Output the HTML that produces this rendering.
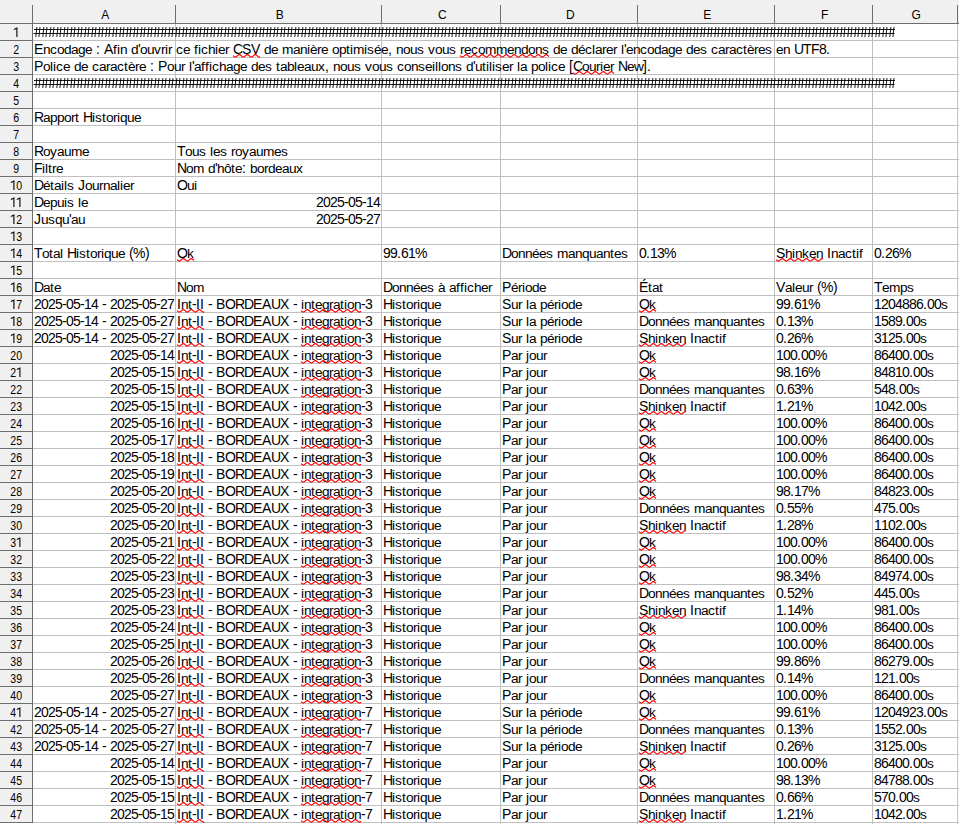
<!DOCTYPE html><html><head><meta charset="utf-8"><style>html,body{margin:0;padding:0;background:#fff;overflow:hidden}svg{display:block}.t{font-family:"Liberation Sans",sans-serif;font-size:14px;fill:#000;white-space:pre}.l{font-size:13.7px}.h{font-family:"Liberation Sans",sans-serif;font-size:12px;fill:#000}</style></head><body>
<svg width="959" height="824" viewBox="0 0 959 824">
<defs>
<path id="w0" d="M233 1.62 C233.10 1.71 233.20 1.81 233.30 1.90 C233.97 2.53 234.63 3.10 235.30 3.10 C235.97 3.10 236.63 2.53 237.30 1.90 C237.97 1.27 238.63 0.70 239.30 0.70 C239.97 0.70 240.63 1.27 241.30 1.90 C241.97 2.53 242.63 3.10 243.30 3.10 C243.97 3.10 244.63 2.53 245.30 1.90 C245.97 1.27 246.63 0.70 247.30 0.70 C247.97 0.70 248.63 1.27 249.30 1.90 C249.97 2.53 250.63 3.10 251.30 3.10 C251.97 3.10 252.63 2.53 253.30 1.90 C253.97 1.27 254.63 0.70 255.30 0.70 C255.97 0.70 256.63 1.27 257.30 1.90 C257.97 2.53 258.63 3.10 259.30 3.10 C259.53 3.10 259.77 3.04 260.00 2.92"/>
<path id="w1" d="M460 1.62 C460.10 1.71 460.20 1.81 460.30 1.90 C460.97 2.53 461.63 3.10 462.30 3.10 C462.97 3.10 463.63 2.53 464.30 1.90 C464.97 1.27 465.63 0.70 466.30 0.70 C466.97 0.70 467.63 1.27 468.30 1.90 C468.97 2.53 469.63 3.10 470.30 3.10 C470.97 3.10 471.63 2.53 472.30 1.90 C472.97 1.27 473.63 0.70 474.30 0.70 C474.97 0.70 475.63 1.27 476.30 1.90 C476.97 2.53 477.63 3.10 478.30 3.10 C478.97 3.10 479.63 2.53 480.30 1.90 C480.97 1.27 481.63 0.70 482.30 0.70 C482.97 0.70 483.63 1.27 484.30 1.90 C484.97 2.53 485.63 3.10 486.30 3.10 C486.97 3.10 487.63 2.53 488.30 1.90 C488.97 1.27 489.63 0.70 490.30 0.70 C490.97 0.70 491.63 1.27 492.30 1.90 C492.97 2.53 493.63 3.10 494.30 3.10 C494.97 3.10 495.63 2.53 496.30 1.90 C496.97 1.27 497.63 0.70 498.30 0.70 C498.97 0.70 499.63 1.27 500.30 1.90 C500.97 2.53 501.63 3.10 502.30 3.10 C502.97 3.10 503.63 2.53 504.30 1.90 C504.97 1.27 505.63 0.70 506.30 0.70 C506.97 0.70 507.63 1.27 508.30 1.90 C508.97 2.53 509.63 3.10 510.30 3.10 C510.97 3.10 511.63 2.53 512.30 1.90 C512.97 1.27 513.63 0.70 514.30 0.70 C514.97 0.70 515.63 1.27 516.30 1.90 C516.97 2.53 517.63 3.10 518.30 3.10 C518.97 3.10 519.63 2.53 520.30 1.90 C520.97 1.27 521.63 0.70 522.30 0.70 C522.97 0.70 523.63 1.27 524.30 1.90 C524.97 2.53 525.63 3.10 526.30 3.10 C526.97 3.10 527.63 2.53 528.30 1.90 C528.97 1.27 529.63 0.70 530.30 0.70 C530.97 0.70 531.63 1.27 532.30 1.90 C532.97 2.53 533.63 3.10 534.30 3.10 C534.97 3.10 535.63 2.53 536.30 1.90 C536.97 1.27 537.63 0.70 538.30 0.70 C538.97 0.70 539.63 1.27 540.30 1.90 C540.97 2.53 541.63 3.10 542.30 3.10 C542.97 3.10 543.63 2.53 544.30 1.90 C544.97 1.27 545.63 0.70 546.30 0.70 C546.97 0.70 547.63 1.27 548.30 1.90 C548.53 2.12 548.77 2.34 549.00 2.53"/>
<path id="w2" d="M573 1.62 C573.10 1.71 573.20 1.81 573.30 1.90 C573.97 2.53 574.63 3.10 575.30 3.10 C575.97 3.10 576.63 2.53 577.30 1.90 C577.97 1.27 578.63 0.70 579.30 0.70 C579.97 0.70 580.63 1.27 581.30 1.90 C581.97 2.53 582.63 3.10 583.30 3.10 C583.97 3.10 584.63 2.53 585.30 1.90 C585.97 1.27 586.63 0.70 587.30 0.70 C587.97 0.70 588.63 1.27 589.30 1.90 C589.97 2.53 590.63 3.10 591.30 3.10 C591.97 3.10 592.63 2.53 593.30 1.90 C593.97 1.27 594.63 0.70 595.30 0.70 C595.97 0.70 596.63 1.27 597.30 1.90 C597.97 2.53 598.63 3.10 599.30 3.10 C599.97 3.10 600.63 2.53 601.30 1.90 C601.97 1.27 602.63 0.70 603.30 0.70 C603.97 0.70 604.63 1.27 605.30 1.90 C605.97 2.53 606.63 3.10 607.30 3.10 C607.97 3.10 608.63 2.53 609.30 1.90 C609.97 1.27 610.63 0.70 611.30 0.70 C611.97 0.70 612.63 1.27 613.30 1.90 C613.53 2.12 613.77 2.34 614.00 2.53"/>
<path id="w3" d="M177 1.62 C177.10 1.71 177.20 1.81 177.30 1.90 C177.97 2.53 178.63 3.10 179.30 3.10 C179.97 3.10 180.63 2.53 181.30 1.90 C181.97 1.27 182.63 0.70 183.30 0.70 C183.97 0.70 184.63 1.27 185.30 1.90 C185.97 2.53 186.63 3.10 187.30 3.10 C187.97 3.10 188.63 2.53 189.30 1.90 C189.97 1.27 190.63 0.70 191.30 0.70 C191.97 0.70 192.63 1.27 193.30 1.90 C193.53 2.12 193.77 2.34 194.00 2.53"/>
<path id="w4" d="M776 1.62 C776.10 1.71 776.20 1.81 776.30 1.90 C776.97 2.53 777.63 3.10 778.30 3.10 C778.97 3.10 779.63 2.53 780.30 1.90 C780.97 1.27 781.63 0.70 782.30 0.70 C782.97 0.70 783.63 1.27 784.30 1.90 C784.97 2.53 785.63 3.10 786.30 3.10 C786.97 3.10 787.63 2.53 788.30 1.90 C788.97 1.27 789.63 0.70 790.30 0.70 C790.97 0.70 791.63 1.27 792.30 1.90 C792.97 2.53 793.63 3.10 794.30 3.10 C794.97 3.10 795.63 2.53 796.30 1.90 C796.97 1.27 797.63 0.70 798.30 0.70 C798.97 0.70 799.63 1.27 800.30 1.90 C800.97 2.53 801.63 3.10 802.30 3.10 C802.97 3.10 803.63 2.53 804.30 1.90 C804.97 1.27 805.63 0.70 806.30 0.70 C806.97 0.70 807.63 1.27 808.30 1.90 C808.97 2.53 809.63 3.10 810.30 3.10 C810.97 3.10 811.63 2.53 812.30 1.90 C812.97 1.27 813.63 0.70 814.30 0.70 C814.97 0.70 815.63 1.27 816.30 1.90 C816.97 2.53 817.63 3.10 818.30 3.10 C818.97 3.10 819.63 2.53 820.30 1.90 C820.97 1.27 821.63 0.70 822.30 0.70 C822.53 0.70 822.77 0.76 823.00 0.88"/>
<path id="w5" d="M177 1.62 C177.10 1.71 177.20 1.81 177.30 1.90 C177.97 2.53 178.63 3.10 179.30 3.10 C179.97 3.10 180.63 2.53 181.30 1.90 C181.97 1.27 182.63 0.70 183.30 0.70 C183.97 0.70 184.63 1.27 185.30 1.90 C185.97 2.53 186.63 3.10 187.30 3.10 C187.97 3.10 188.63 2.53 189.30 1.90 C189.97 1.27 190.63 0.70 191.30 0.70 C191.97 0.70 192.63 1.27 193.30 1.90 C193.97 2.53 194.63 3.10 195.30 3.10 C195.97 3.10 196.63 2.53 197.30 1.90 C197.97 1.27 198.63 0.70 199.30 0.70 C199.97 0.70 200.63 1.27 201.30 1.90 C201.97 2.53 202.63 3.10 203.30 3.10 C203.53 3.10 203.77 3.04 204.00 2.92"/>
<path id="w6" d="M301 1.62 C301.10 1.71 301.20 1.81 301.30 1.90 C301.97 2.53 302.63 3.10 303.30 3.10 C303.97 3.10 304.63 2.53 305.30 1.90 C305.97 1.27 306.63 0.70 307.30 0.70 C307.97 0.70 308.63 1.27 309.30 1.90 C309.97 2.53 310.63 3.10 311.30 3.10 C311.97 3.10 312.63 2.53 313.30 1.90 C313.97 1.27 314.63 0.70 315.30 0.70 C315.97 0.70 316.63 1.27 317.30 1.90 C317.97 2.53 318.63 3.10 319.30 3.10 C319.97 3.10 320.63 2.53 321.30 1.90 C321.97 1.27 322.63 0.70 323.30 0.70 C323.97 0.70 324.63 1.27 325.30 1.90 C325.97 2.53 326.63 3.10 327.30 3.10 C327.97 3.10 328.63 2.53 329.30 1.90 C329.97 1.27 330.63 0.70 331.30 0.70 C331.97 0.70 332.63 1.27 333.30 1.90 C333.97 2.53 334.63 3.10 335.30 3.10 C335.97 3.10 336.63 2.53 337.30 1.90 C337.97 1.27 338.63 0.70 339.30 0.70 C339.97 0.70 340.63 1.27 341.30 1.90 C341.97 2.53 342.63 3.10 343.30 3.10 C343.97 3.10 344.63 2.53 345.30 1.90 C345.97 1.27 346.63 0.70 347.30 0.70 C347.97 0.70 348.63 1.27 349.30 1.90 C349.97 2.53 350.63 3.10 351.30 3.10 C351.97 3.10 352.63 2.53 353.30 1.90 C353.97 1.27 354.63 0.70 355.30 0.70 C355.97 0.70 356.63 1.27 357.30 1.90 C357.97 2.53 358.63 3.10 359.30 3.10 C359.87 3.10 360.43 2.70 361.00 2.18"/>
<path id="w7" d="M639 1.62 C639.10 1.71 639.20 1.81 639.30 1.90 C639.97 2.53 640.63 3.10 641.30 3.10 C641.97 3.10 642.63 2.53 643.30 1.90 C643.97 1.27 644.63 0.70 645.30 0.70 C645.97 0.70 646.63 1.27 647.30 1.90 C647.97 2.53 648.63 3.10 649.30 3.10 C649.97 3.10 650.63 2.53 651.30 1.90 C651.97 1.27 652.63 0.70 653.30 0.70 C653.97 0.70 654.63 1.27 655.30 1.90 C655.53 2.12 655.77 2.34 656.00 2.53"/>
<path id="w8" d="M639 1.62 C639.10 1.71 639.20 1.81 639.30 1.90 C639.97 2.53 640.63 3.10 641.30 3.10 C641.97 3.10 642.63 2.53 643.30 1.90 C643.97 1.27 644.63 0.70 645.30 0.70 C645.97 0.70 646.63 1.27 647.30 1.90 C647.97 2.53 648.63 3.10 649.30 3.10 C649.97 3.10 650.63 2.53 651.30 1.90 C651.97 1.27 652.63 0.70 653.30 0.70 C653.97 0.70 654.63 1.27 655.30 1.90 C655.97 2.53 656.63 3.10 657.30 3.10 C657.97 3.10 658.63 2.53 659.30 1.90 C659.97 1.27 660.63 0.70 661.30 0.70 C661.97 0.70 662.63 1.27 663.30 1.90 C663.97 2.53 664.63 3.10 665.30 3.10 C665.97 3.10 666.63 2.53 667.30 1.90 C667.97 1.27 668.63 0.70 669.30 0.70 C669.97 0.70 670.63 1.27 671.30 1.90 C671.97 2.53 672.63 3.10 673.30 3.10 C673.97 3.10 674.63 2.53 675.30 1.90 C675.97 1.27 676.63 0.70 677.30 0.70 C677.97 0.70 678.63 1.27 679.30 1.90 C679.97 2.53 680.63 3.10 681.30 3.10 C681.97 3.10 682.63 2.53 683.30 1.90 C683.97 1.27 684.63 0.70 685.30 0.70 C685.53 0.70 685.77 0.76 686.00 0.88"/>
</defs>
<rect width="959" height="824" fill="#fff"/>
<rect width="959" height="23" fill="#f0f0f0"/><rect y="23" width="32" height="800" fill="#f0f0f0"/>
<path d="M33 40.5 H959 M33 57.5 H959 M33 74.5 H959 M33 91.5 H959 M33 108.5 H959 M33 125.5 H959 M33 142.5 H959 M33 159.5 H959 M33 176.5 H959 M33 193.5 H959 M33 210.5 H959 M33 227.5 H959 M33 244.5 H959 M33 261.5 H959 M33 278.5 H959 M33 295.5 H959 M33 312.5 H959 M33 329.5 H959 M33 346.5 H959 M33 363.5 H959 M33 380.5 H959 M33 397.5 H959 M33 414.5 H959 M33 431.5 H959 M33 448.5 H959 M33 465.5 H959 M33 482.5 H959 M33 499.5 H959 M33 516.5 H959 M33 533.5 H959 M33 550.5 H959 M33 567.5 H959 M33 584.5 H959 M33 601.5 H959 M33 618.5 H959 M33 635.5 H959 M33 652.5 H959 M33 669.5 H959 M33 686.5 H959 M33 703.5 H959 M33 720.5 H959 M33 737.5 H959 M33 754.5 H959 M33 771.5 H959 M33 788.5 H959 M33 805.5 H959 M33 822.5 H959 M175.5 24 V824 M381.5 24 V824 M500.5 24 V824 M637.5 24 V824 M774.5 24 V824 M872.5 24 V824 M957.5 24 V824" stroke="#c0c0c0" stroke-width="1" fill="none"/>
<path d="M0 23.5 H959 M32.5 5 V823 M175.5 5 V23 M381.5 5 V23 M500.5 5 V23 M637.5 5 V23 M774.5 5 V23 M872.5 5 V23 M957.5 5 V23 M0 40.5 H32 M0 57.5 H32 M0 74.5 H32 M0 91.5 H32 M0 108.5 H32 M0 125.5 H32 M0 142.5 H32 M0 159.5 H32 M0 176.5 H32 M0 193.5 H32 M0 210.5 H32 M0 227.5 H32 M0 244.5 H32 M0 261.5 H32 M0 278.5 H32 M0 295.5 H32 M0 312.5 H32 M0 329.5 H32 M0 346.5 H32 M0 363.5 H32 M0 380.5 H32 M0 397.5 H32 M0 414.5 H32 M0 431.5 H32 M0 448.5 H32 M0 465.5 H32 M0 482.5 H32 M0 499.5 H32 M0 516.5 H32 M0 533.5 H32 M0 550.5 H32 M0 567.5 H32 M0 584.5 H32 M0 601.5 H32 M0 618.5 H32 M0 635.5 H32 M0 652.5 H32 M0 669.5 H32 M0 686.5 H32 M0 703.5 H32 M0 720.5 H32 M0 737.5 H32 M0 754.5 H32 M0 771.5 H32 M0 788.5 H32 M0 805.5 H32 M0 822.5 H32" stroke="#6e6e6e" stroke-width="1" fill="none"/>
<text class="h" x="105.25" y="19" text-anchor="middle">A</text>
<text class="h" x="279.75" y="19" text-anchor="middle">B</text>
<text class="h" x="442.25" y="19" text-anchor="middle">C</text>
<text class="h" x="570.25" y="19" text-anchor="middle">D</text>
<text class="h" x="707.25" y="19" text-anchor="middle">E</text>
<text class="h" x="824.75" y="19" text-anchor="middle">F</text>
<text class="h" x="916.25" y="19" text-anchor="middle">G</text>
<text class="h" transform="translate(13.3 54) scale(0.88 1)">2</text>
<text class="h" transform="translate(13.3 71) scale(0.88 1)">3</text>
<text class="h" transform="translate(13.3 88) scale(0.88 1)">4</text>
<text class="h" transform="translate(13.3 105) scale(0.88 1)">5</text>
<text class="h" transform="translate(13.3 122) scale(0.88 1)">6</text>
<text class="h" transform="translate(13.3 139) scale(0.88 1)">7</text>
<text class="h" transform="translate(13.3 156) scale(0.88 1)">8</text>
<text class="h" transform="translate(13.3 173) scale(0.88 1)">9</text>
<text class="h" transform="translate(16.3 190) scale(0.88 1)">0</text>
<text class="h" transform="translate(16.3 224) scale(0.88 1)">2</text>
<text class="h" transform="translate(16.3 241) scale(0.88 1)">3</text>
<text class="h" transform="translate(16.3 258) scale(0.88 1)">4</text>
<text class="h" transform="translate(16.3 275) scale(0.88 1)">5</text>
<text class="h" transform="translate(16.3 292) scale(0.88 1)">6</text>
<text class="h" transform="translate(16.3 309) scale(0.88 1)">7</text>
<text class="h" transform="translate(16.3 326) scale(0.88 1)">8</text>
<text class="h" transform="translate(16.3 343) scale(0.88 1)">9</text>
<text class="h" transform="translate(10.3 360) scale(0.88 1)">2</text>
<text class="h" transform="translate(16.3 360) scale(0.88 1)">0</text>
<text class="h" transform="translate(10.3 377) scale(0.88 1)">2</text>
<text class="h" transform="translate(10.3 394) scale(0.88 1)">2</text>
<text class="h" transform="translate(16.3 394) scale(0.88 1)">2</text>
<text class="h" transform="translate(10.3 411) scale(0.88 1)">2</text>
<text class="h" transform="translate(16.3 411) scale(0.88 1)">3</text>
<text class="h" transform="translate(10.3 428) scale(0.88 1)">2</text>
<text class="h" transform="translate(16.3 428) scale(0.88 1)">4</text>
<text class="h" transform="translate(10.3 445) scale(0.88 1)">2</text>
<text class="h" transform="translate(16.3 445) scale(0.88 1)">5</text>
<text class="h" transform="translate(10.3 462) scale(0.88 1)">2</text>
<text class="h" transform="translate(16.3 462) scale(0.88 1)">6</text>
<text class="h" transform="translate(10.3 479) scale(0.88 1)">2</text>
<text class="h" transform="translate(16.3 479) scale(0.88 1)">7</text>
<text class="h" transform="translate(10.3 496) scale(0.88 1)">2</text>
<text class="h" transform="translate(16.3 496) scale(0.88 1)">8</text>
<text class="h" transform="translate(10.3 513) scale(0.88 1)">2</text>
<text class="h" transform="translate(16.3 513) scale(0.88 1)">9</text>
<text class="h" transform="translate(10.3 530) scale(0.88 1)">3</text>
<text class="h" transform="translate(16.3 530) scale(0.88 1)">0</text>
<text class="h" transform="translate(10.3 547) scale(0.88 1)">3</text>
<text class="h" transform="translate(10.3 564) scale(0.88 1)">3</text>
<text class="h" transform="translate(16.3 564) scale(0.88 1)">2</text>
<text class="h" transform="translate(10.3 581) scale(0.88 1)">3</text>
<text class="h" transform="translate(16.3 581) scale(0.88 1)">3</text>
<text class="h" transform="translate(10.3 598) scale(0.88 1)">3</text>
<text class="h" transform="translate(16.3 598) scale(0.88 1)">4</text>
<text class="h" transform="translate(10.3 615) scale(0.88 1)">3</text>
<text class="h" transform="translate(16.3 615) scale(0.88 1)">5</text>
<text class="h" transform="translate(10.3 632) scale(0.88 1)">3</text>
<text class="h" transform="translate(16.3 632) scale(0.88 1)">6</text>
<text class="h" transform="translate(10.3 649) scale(0.88 1)">3</text>
<text class="h" transform="translate(16.3 649) scale(0.88 1)">7</text>
<text class="h" transform="translate(10.3 666) scale(0.88 1)">3</text>
<text class="h" transform="translate(16.3 666) scale(0.88 1)">8</text>
<text class="h" transform="translate(10.3 683) scale(0.88 1)">3</text>
<text class="h" transform="translate(16.3 683) scale(0.88 1)">9</text>
<text class="h" transform="translate(10.3 700) scale(0.88 1)">4</text>
<text class="h" transform="translate(16.3 700) scale(0.88 1)">0</text>
<text class="h" transform="translate(10.3 717) scale(0.88 1)">4</text>
<text class="h" transform="translate(10.3 734) scale(0.88 1)">4</text>
<text class="h" transform="translate(16.3 734) scale(0.88 1)">2</text>
<text class="h" transform="translate(10.3 751) scale(0.88 1)">4</text>
<text class="h" transform="translate(16.3 751) scale(0.88 1)">3</text>
<text class="h" transform="translate(10.3 768) scale(0.88 1)">4</text>
<text class="h" transform="translate(16.3 768) scale(0.88 1)">4</text>
<text class="h" transform="translate(10.3 785) scale(0.88 1)">4</text>
<text class="h" transform="translate(16.3 785) scale(0.88 1)">5</text>
<text class="h" transform="translate(10.3 802) scale(0.88 1)">4</text>
<text class="h" transform="translate(16.3 802) scale(0.88 1)">6</text>
<text class="h" transform="translate(10.3 819) scale(0.88 1)">4</text>
<text class="h" transform="translate(16.3 819) scale(0.88 1)">7</text>
<path d="M13.9 29.6 L16.9 28.1 V37 M10.9 182.6 L13.9 181.1 V190 M10.9 199.6 L13.9 198.1 V207 M16.9 199.6 L19.9 198.1 V207 M10.9 216.6 L13.9 215.1 V224 M10.9 233.6 L13.9 232.1 V241 M10.9 250.6 L13.9 249.1 V258 M10.9 267.6 L13.9 266.1 V275 M10.9 284.6 L13.9 283.1 V292 M10.9 301.6 L13.9 300.1 V309 M10.9 318.6 L13.9 317.1 V326 M10.9 335.6 L13.9 334.1 V343 M16.9 369.6 L19.9 368.1 V377 M16.9 539.6 L19.9 538.1 V547 M16.9 709.6 L19.9 708.1 V717" stroke="#000" stroke-width="1.1" fill="none"/>
<path d="M34 29.5 H895 M33.5 33.5 H894.5 M36.9 27 l-1.1 10 M40 27 l-1.1 10 M43.9 27 l-1.1 10 M47 27 l-1.1 10 M50.9 27 l-1.1 10 M54 27 l-1.1 10 M57.9 27 l-1.1 10 M61 27 l-1.1 10 M64.9 27 l-1.1 10 M68 27 l-1.1 10 M71.9 27 l-1.1 10 M75 27 l-1.1 10 M78.9 27 l-1.1 10 M82 27 l-1.1 10 M85.9 27 l-1.1 10 M89 27 l-1.1 10 M92.9 27 l-1.1 10 M96 27 l-1.1 10 M99.9 27 l-1.1 10 M103 27 l-1.1 10 M106.9 27 l-1.1 10 M110 27 l-1.1 10 M113.9 27 l-1.1 10 M117 27 l-1.1 10 M120.9 27 l-1.1 10 M124 27 l-1.1 10 M127.9 27 l-1.1 10 M131 27 l-1.1 10 M134.9 27 l-1.1 10 M138 27 l-1.1 10 M141.9 27 l-1.1 10 M145 27 l-1.1 10 M148.9 27 l-1.1 10 M152 27 l-1.1 10 M155.9 27 l-1.1 10 M159 27 l-1.1 10 M162.9 27 l-1.1 10 M166 27 l-1.1 10 M169.9 27 l-1.1 10 M173 27 l-1.1 10 M176.9 27 l-1.1 10 M180 27 l-1.1 10 M183.9 27 l-1.1 10 M187 27 l-1.1 10 M190.9 27 l-1.1 10 M194 27 l-1.1 10 M197.9 27 l-1.1 10 M201 27 l-1.1 10 M204.9 27 l-1.1 10 M208 27 l-1.1 10 M211.9 27 l-1.1 10 M215 27 l-1.1 10 M218.9 27 l-1.1 10 M222 27 l-1.1 10 M225.9 27 l-1.1 10 M229 27 l-1.1 10 M232.9 27 l-1.1 10 M236 27 l-1.1 10 M239.9 27 l-1.1 10 M243 27 l-1.1 10 M246.9 27 l-1.1 10 M250 27 l-1.1 10 M253.9 27 l-1.1 10 M257 27 l-1.1 10 M260.9 27 l-1.1 10 M264 27 l-1.1 10 M267.9 27 l-1.1 10 M271 27 l-1.1 10 M274.9 27 l-1.1 10 M278 27 l-1.1 10 M281.9 27 l-1.1 10 M285 27 l-1.1 10 M288.9 27 l-1.1 10 M292 27 l-1.1 10 M295.9 27 l-1.1 10 M299 27 l-1.1 10 M302.9 27 l-1.1 10 M306 27 l-1.1 10 M309.9 27 l-1.1 10 M313 27 l-1.1 10 M316.9 27 l-1.1 10 M320 27 l-1.1 10 M323.9 27 l-1.1 10 M327 27 l-1.1 10 M330.9 27 l-1.1 10 M334 27 l-1.1 10 M337.9 27 l-1.1 10 M341 27 l-1.1 10 M344.9 27 l-1.1 10 M348 27 l-1.1 10 M351.9 27 l-1.1 10 M355 27 l-1.1 10 M358.9 27 l-1.1 10 M362 27 l-1.1 10 M365.9 27 l-1.1 10 M369 27 l-1.1 10 M372.9 27 l-1.1 10 M376 27 l-1.1 10 M379.9 27 l-1.1 10 M383 27 l-1.1 10 M386.9 27 l-1.1 10 M390 27 l-1.1 10 M393.9 27 l-1.1 10 M397 27 l-1.1 10 M400.9 27 l-1.1 10 M404 27 l-1.1 10 M407.9 27 l-1.1 10 M411 27 l-1.1 10 M414.9 27 l-1.1 10 M418 27 l-1.1 10 M421.9 27 l-1.1 10 M425 27 l-1.1 10 M428.9 27 l-1.1 10 M432 27 l-1.1 10 M435.9 27 l-1.1 10 M439 27 l-1.1 10 M442.9 27 l-1.1 10 M446 27 l-1.1 10 M449.9 27 l-1.1 10 M453 27 l-1.1 10 M456.9 27 l-1.1 10 M460 27 l-1.1 10 M463.9 27 l-1.1 10 M467 27 l-1.1 10 M470.9 27 l-1.1 10 M474 27 l-1.1 10 M477.9 27 l-1.1 10 M481 27 l-1.1 10 M484.9 27 l-1.1 10 M488 27 l-1.1 10 M491.9 27 l-1.1 10 M495 27 l-1.1 10 M498.9 27 l-1.1 10 M502 27 l-1.1 10 M505.9 27 l-1.1 10 M509 27 l-1.1 10 M512.9 27 l-1.1 10 M516 27 l-1.1 10 M519.9 27 l-1.1 10 M523 27 l-1.1 10 M526.9 27 l-1.1 10 M530 27 l-1.1 10 M533.9 27 l-1.1 10 M537 27 l-1.1 10 M540.9 27 l-1.1 10 M544 27 l-1.1 10 M547.9 27 l-1.1 10 M551 27 l-1.1 10 M554.9 27 l-1.1 10 M558 27 l-1.1 10 M561.9 27 l-1.1 10 M565 27 l-1.1 10 M568.9 27 l-1.1 10 M572 27 l-1.1 10 M575.9 27 l-1.1 10 M579 27 l-1.1 10 M582.9 27 l-1.1 10 M586 27 l-1.1 10 M589.9 27 l-1.1 10 M593 27 l-1.1 10 M596.9 27 l-1.1 10 M600 27 l-1.1 10 M603.9 27 l-1.1 10 M607 27 l-1.1 10 M610.9 27 l-1.1 10 M614 27 l-1.1 10 M617.9 27 l-1.1 10 M621 27 l-1.1 10 M624.9 27 l-1.1 10 M628 27 l-1.1 10 M631.9 27 l-1.1 10 M635 27 l-1.1 10 M638.9 27 l-1.1 10 M642 27 l-1.1 10 M645.9 27 l-1.1 10 M649 27 l-1.1 10 M652.9 27 l-1.1 10 M656 27 l-1.1 10 M659.9 27 l-1.1 10 M663 27 l-1.1 10 M666.9 27 l-1.1 10 M670 27 l-1.1 10 M673.9 27 l-1.1 10 M677 27 l-1.1 10 M680.9 27 l-1.1 10 M684 27 l-1.1 10 M687.9 27 l-1.1 10 M691 27 l-1.1 10 M694.9 27 l-1.1 10 M698 27 l-1.1 10 M701.9 27 l-1.1 10 M705 27 l-1.1 10 M708.9 27 l-1.1 10 M712 27 l-1.1 10 M715.9 27 l-1.1 10 M719 27 l-1.1 10 M722.9 27 l-1.1 10 M726 27 l-1.1 10 M729.9 27 l-1.1 10 M733 27 l-1.1 10 M736.9 27 l-1.1 10 M740 27 l-1.1 10 M743.9 27 l-1.1 10 M747 27 l-1.1 10 M750.9 27 l-1.1 10 M754 27 l-1.1 10 M757.9 27 l-1.1 10 M761 27 l-1.1 10 M764.9 27 l-1.1 10 M768 27 l-1.1 10 M771.9 27 l-1.1 10 M775 27 l-1.1 10 M778.9 27 l-1.1 10 M782 27 l-1.1 10 M785.9 27 l-1.1 10 M789 27 l-1.1 10 M792.9 27 l-1.1 10 M796 27 l-1.1 10 M799.9 27 l-1.1 10 M803 27 l-1.1 10 M806.9 27 l-1.1 10 M810 27 l-1.1 10 M813.9 27 l-1.1 10 M817 27 l-1.1 10 M820.9 27 l-1.1 10 M824 27 l-1.1 10 M827.9 27 l-1.1 10 M831 27 l-1.1 10 M834.9 27 l-1.1 10 M838 27 l-1.1 10 M841.9 27 l-1.1 10 M845 27 l-1.1 10 M848.9 27 l-1.1 10 M852 27 l-1.1 10 M855.9 27 l-1.1 10 M859 27 l-1.1 10 M862.9 27 l-1.1 10 M866 27 l-1.1 10 M869.9 27 l-1.1 10 M873 27 l-1.1 10 M876.9 27 l-1.1 10 M880 27 l-1.1 10 M883.9 27 l-1.1 10 M887 27 l-1.1 10 M890.9 27 l-1.1 10 M894 27 l-1.1 10 M34 80.5 H895 M33.5 84.5 H894.5 M36.9 78 l-1.1 10 M40 78 l-1.1 10 M43.9 78 l-1.1 10 M47 78 l-1.1 10 M50.9 78 l-1.1 10 M54 78 l-1.1 10 M57.9 78 l-1.1 10 M61 78 l-1.1 10 M64.9 78 l-1.1 10 M68 78 l-1.1 10 M71.9 78 l-1.1 10 M75 78 l-1.1 10 M78.9 78 l-1.1 10 M82 78 l-1.1 10 M85.9 78 l-1.1 10 M89 78 l-1.1 10 M92.9 78 l-1.1 10 M96 78 l-1.1 10 M99.9 78 l-1.1 10 M103 78 l-1.1 10 M106.9 78 l-1.1 10 M110 78 l-1.1 10 M113.9 78 l-1.1 10 M117 78 l-1.1 10 M120.9 78 l-1.1 10 M124 78 l-1.1 10 M127.9 78 l-1.1 10 M131 78 l-1.1 10 M134.9 78 l-1.1 10 M138 78 l-1.1 10 M141.9 78 l-1.1 10 M145 78 l-1.1 10 M148.9 78 l-1.1 10 M152 78 l-1.1 10 M155.9 78 l-1.1 10 M159 78 l-1.1 10 M162.9 78 l-1.1 10 M166 78 l-1.1 10 M169.9 78 l-1.1 10 M173 78 l-1.1 10 M176.9 78 l-1.1 10 M180 78 l-1.1 10 M183.9 78 l-1.1 10 M187 78 l-1.1 10 M190.9 78 l-1.1 10 M194 78 l-1.1 10 M197.9 78 l-1.1 10 M201 78 l-1.1 10 M204.9 78 l-1.1 10 M208 78 l-1.1 10 M211.9 78 l-1.1 10 M215 78 l-1.1 10 M218.9 78 l-1.1 10 M222 78 l-1.1 10 M225.9 78 l-1.1 10 M229 78 l-1.1 10 M232.9 78 l-1.1 10 M236 78 l-1.1 10 M239.9 78 l-1.1 10 M243 78 l-1.1 10 M246.9 78 l-1.1 10 M250 78 l-1.1 10 M253.9 78 l-1.1 10 M257 78 l-1.1 10 M260.9 78 l-1.1 10 M264 78 l-1.1 10 M267.9 78 l-1.1 10 M271 78 l-1.1 10 M274.9 78 l-1.1 10 M278 78 l-1.1 10 M281.9 78 l-1.1 10 M285 78 l-1.1 10 M288.9 78 l-1.1 10 M292 78 l-1.1 10 M295.9 78 l-1.1 10 M299 78 l-1.1 10 M302.9 78 l-1.1 10 M306 78 l-1.1 10 M309.9 78 l-1.1 10 M313 78 l-1.1 10 M316.9 78 l-1.1 10 M320 78 l-1.1 10 M323.9 78 l-1.1 10 M327 78 l-1.1 10 M330.9 78 l-1.1 10 M334 78 l-1.1 10 M337.9 78 l-1.1 10 M341 78 l-1.1 10 M344.9 78 l-1.1 10 M348 78 l-1.1 10 M351.9 78 l-1.1 10 M355 78 l-1.1 10 M358.9 78 l-1.1 10 M362 78 l-1.1 10 M365.9 78 l-1.1 10 M369 78 l-1.1 10 M372.9 78 l-1.1 10 M376 78 l-1.1 10 M379.9 78 l-1.1 10 M383 78 l-1.1 10 M386.9 78 l-1.1 10 M390 78 l-1.1 10 M393.9 78 l-1.1 10 M397 78 l-1.1 10 M400.9 78 l-1.1 10 M404 78 l-1.1 10 M407.9 78 l-1.1 10 M411 78 l-1.1 10 M414.9 78 l-1.1 10 M418 78 l-1.1 10 M421.9 78 l-1.1 10 M425 78 l-1.1 10 M428.9 78 l-1.1 10 M432 78 l-1.1 10 M435.9 78 l-1.1 10 M439 78 l-1.1 10 M442.9 78 l-1.1 10 M446 78 l-1.1 10 M449.9 78 l-1.1 10 M453 78 l-1.1 10 M456.9 78 l-1.1 10 M460 78 l-1.1 10 M463.9 78 l-1.1 10 M467 78 l-1.1 10 M470.9 78 l-1.1 10 M474 78 l-1.1 10 M477.9 78 l-1.1 10 M481 78 l-1.1 10 M484.9 78 l-1.1 10 M488 78 l-1.1 10 M491.9 78 l-1.1 10 M495 78 l-1.1 10 M498.9 78 l-1.1 10 M502 78 l-1.1 10 M505.9 78 l-1.1 10 M509 78 l-1.1 10 M512.9 78 l-1.1 10 M516 78 l-1.1 10 M519.9 78 l-1.1 10 M523 78 l-1.1 10 M526.9 78 l-1.1 10 M530 78 l-1.1 10 M533.9 78 l-1.1 10 M537 78 l-1.1 10 M540.9 78 l-1.1 10 M544 78 l-1.1 10 M547.9 78 l-1.1 10 M551 78 l-1.1 10 M554.9 78 l-1.1 10 M558 78 l-1.1 10 M561.9 78 l-1.1 10 M565 78 l-1.1 10 M568.9 78 l-1.1 10 M572 78 l-1.1 10 M575.9 78 l-1.1 10 M579 78 l-1.1 10 M582.9 78 l-1.1 10 M586 78 l-1.1 10 M589.9 78 l-1.1 10 M593 78 l-1.1 10 M596.9 78 l-1.1 10 M600 78 l-1.1 10 M603.9 78 l-1.1 10 M607 78 l-1.1 10 M610.9 78 l-1.1 10 M614 78 l-1.1 10 M617.9 78 l-1.1 10 M621 78 l-1.1 10 M624.9 78 l-1.1 10 M628 78 l-1.1 10 M631.9 78 l-1.1 10 M635 78 l-1.1 10 M638.9 78 l-1.1 10 M642 78 l-1.1 10 M645.9 78 l-1.1 10 M649 78 l-1.1 10 M652.9 78 l-1.1 10 M656 78 l-1.1 10 M659.9 78 l-1.1 10 M663 78 l-1.1 10 M666.9 78 l-1.1 10 M670 78 l-1.1 10 M673.9 78 l-1.1 10 M677 78 l-1.1 10 M680.9 78 l-1.1 10 M684 78 l-1.1 10 M687.9 78 l-1.1 10 M691 78 l-1.1 10 M694.9 78 l-1.1 10 M698 78 l-1.1 10 M701.9 78 l-1.1 10 M705 78 l-1.1 10 M708.9 78 l-1.1 10 M712 78 l-1.1 10 M715.9 78 l-1.1 10 M719 78 l-1.1 10 M722.9 78 l-1.1 10 M726 78 l-1.1 10 M729.9 78 l-1.1 10 M733 78 l-1.1 10 M736.9 78 l-1.1 10 M740 78 l-1.1 10 M743.9 78 l-1.1 10 M747 78 l-1.1 10 M750.9 78 l-1.1 10 M754 78 l-1.1 10 M757.9 78 l-1.1 10 M761 78 l-1.1 10 M764.9 78 l-1.1 10 M768 78 l-1.1 10 M771.9 78 l-1.1 10 M775 78 l-1.1 10 M778.9 78 l-1.1 10 M782 78 l-1.1 10 M785.9 78 l-1.1 10 M789 78 l-1.1 10 M792.9 78 l-1.1 10 M796 78 l-1.1 10 M799.9 78 l-1.1 10 M803 78 l-1.1 10 M806.9 78 l-1.1 10 M810 78 l-1.1 10 M813.9 78 l-1.1 10 M817 78 l-1.1 10 M820.9 78 l-1.1 10 M824 78 l-1.1 10 M827.9 78 l-1.1 10 M831 78 l-1.1 10 M834.9 78 l-1.1 10 M838 78 l-1.1 10 M841.9 78 l-1.1 10 M845 78 l-1.1 10 M848.9 78 l-1.1 10 M852 78 l-1.1 10 M855.9 78 l-1.1 10 M859 78 l-1.1 10 M862.9 78 l-1.1 10 M866 78 l-1.1 10 M869.9 78 l-1.1 10 M873 78 l-1.1 10 M876.9 78 l-1.1 10 M880 78 l-1.1 10 M883.9 78 l-1.1 10 M887 78 l-1.1 10 M890.9 78 l-1.1 10 M894 78 l-1.1 10" stroke="#000" stroke-width="0.9" fill="none"/>
<text class="t" y="54"><tspan x="34">E</tspan><tspan class="l" x="43 50 57 64 71 78 85 92">ncodage </tspan><tspan x="96 100 104">: A</tspan><tspan class="l" x="113 117 120 127 131">fin d</tspan><tspan x="138">&#x27;</tspan><tspan class="l" x="140 147 154 161 165 168 172 176 183 190 194 198 201 208 215 218 225 229">ouvrir ce fichier </tspan><tspan x="233 242 251 260">CSV </tspan><tspan class="l" x="264 271 278 282 293 300 307 310 317 321 328 332 339 346 350 353 364 367 374 381">de manière optimisée</tspan><tspan x="388 392">, </tspan><tspan class="l" x="396 403 410 417 424 428 435 442 449 456 460 464 471 478 485 496 507 514 521 528 535 542 549 553 560 567 571 578 585 592 595 602 606 613 617 621">nous vous recommendons de déclarer l</tspan><tspan x="624">&#x27;</tspan><tspan class="l" x="626 633 640 647 654 661 668 675 682 686 693 700 707 711 718 725 729 736 743 747 754 758 765 772 776 783 790">encodage des caractères en </tspan><tspan x="794 803 811 819 826">UTF8.</tspan></text>
<text class="t" y="71"><tspan x="34">P</tspan><tspan class="l" x="43 50 53 56 63 70 74 81 88 92 99 106 110 117 124 128 135 139 146">olice de caractère </tspan><tspan x="150 154 158">: P</tspan><tspan class="l" x="167 174 181 185 189">our l</tspan><tspan x="192">&#x27;</tspan><tspan class="l" x="194 201 205 209 212 219 226 233 240 247 251 258 265 272 276 280 287 294 297 304 311 318">affichage des tableaux</tspan><tspan x="325 329">, </tspan><tspan class="l" x="333 340 347 354 361 365 372 379 386 393 397 404 411 418 425 432 435 438 441 448 455 462 466">nous vous conseillons d</tspan><tspan x="473">&#x27;</tspan><tspan class="l" x="475 482 486 489 492 495 502 509 513 517 520 527 531 538 545 548 551 558 565">utiliser la police </tspan><tspan x="569 573">[C</tspan><tspan class="l" x="582 589 596 600 603 610 614">ourier </tspan><tspan x="618">N</tspan><tspan class="l" x="627 634">ew</tspan><tspan x="643 647">].</tspan></text>
<text class="t" y="122"><tspan x="34">R</tspan><tspan class="l" x="43 50 57 64 71 75 79">apport </tspan><tspan x="83">H</tspan><tspan class="l" x="92 95 102 106 113 117 120 127 134">istorique</tspan></text>
<text class="t" y="156"><tspan x="34">R</tspan><tspan class="l" x="43 50 57 64 71 82">oyaume</tspan></text>
<text class="t" y="156"><tspan x="177">T</tspan><tspan class="l" x="185 192 199 206 210 213 220 227 231 235 242 249 256 263 274 281">ous les royaumes</tspan></text>
<text class="t" y="173"><tspan x="34">F</tspan><tspan class="l" x="42 45 48 52 56">iltre</tspan></text>
<text class="t" y="173"><tspan x="177">N</tspan><tspan class="l" x="186 193 204 208">om d</tspan><tspan x="215">&#x27;</tspan><tspan class="l" x="217 224 231 235">hôte</tspan><tspan x="242 246">: </tspan><tspan class="l" x="250 257 264 268 275 282 289 296">bordeaux</tspan></text>
<text class="t" y="190"><tspan x="34">D</tspan><tspan class="l" x="43 50 54 61 64 67 74">étails </tspan><tspan x="78">J</tspan><tspan class="l" x="85 92 99 103 110 117 120 123 130">ournalier</tspan></text>
<text class="t" y="190"><tspan x="177">O</tspan><tspan class="l" x="187 194">ui</tspan></text>
<text class="t" y="207"><tspan x="34">D</tspan><tspan class="l" x="43 50 57 64 67 74 78 81">epuis le</tspan></text>
<text class="t" y="207"><tspan x="316 323 330 337 344 348 355 362 366 373">2025-05-14</tspan></text>
<text class="t" y="224"><tspan x="34">J</tspan><tspan class="l" x="41 48 55 62">usqu</tspan><tspan x="69">&#x27;</tspan><tspan class="l" x="71 78">au</tspan></text>
<text class="t" y="224"><tspan x="316 323 330 337 344 348 355 362 366 373">2025-05-27</tspan></text>
<text class="t" y="258"><tspan x="34">T</tspan><tspan class="l" x="42 49 53 60 63">otal </tspan><tspan x="67">H</tspan><tspan class="l" x="76 79 86 90 97 101 104 111 118 125">istorique </tspan><tspan x="129 133 145">(%)</tspan></text>
<text class="t" y="258"><tspan x="177">O</tspan><tspan class="l" x="187">k</tspan></text>
<text class="t" y="258"><tspan x="383 390 397 401 408 415">99.61%</tspan></text>
<text class="t" y="258"><tspan x="502">D</tspan><tspan class="l" x="511 518 525 532 539 546 553 557 568 575 582 589 596 603 610 614 621">onnées manquantes</tspan></text>
<text class="t" y="258"><tspan x="639 646 650 657 664">0.13%</tspan></text>
<text class="t" y="258"><tspan x="776">S</tspan><tspan class="l" x="785 792 795 802 809 816 823">hinken </tspan><tspan x="827">I</tspan><tspan class="l" x="831 838 845 852 856 859">nactif</tspan></text>
<text class="t" y="258"><tspan x="874 881 885 892 899">0.26%</tspan></text>
<text class="t" y="292"><tspan x="34">D</tspan><tspan class="l" x="43 50 54">ate</tspan></text>
<text class="t" y="292"><tspan x="177">N</tspan><tspan class="l" x="186 193">om</tspan></text>
<text class="t" y="292"><tspan x="383">D</tspan><tspan class="l" x="392 399 406 413 420 427 434 438 445 449 456 460 464 467 474 481 488">onnées à afficher</tspan></text>
<text class="t" y="292"><tspan x="502">P</tspan><tspan class="l" x="511 518 522 525 532 539">ériode</tspan></text>
<text class="t" y="292"><tspan x="639">É</tspan><tspan class="l" x="648 652 659">tat</tspan></text>
<text class="t" y="292"><tspan x="776">V</tspan><tspan class="l" x="785 792 795 802 809 813">aleur </tspan><tspan x="817 821 833">(%)</tspan></text>
<text class="t" y="292"><tspan x="874">T</tspan><tspan class="l" x="882 889 900 907">emps</tspan></text>
<text class="t" y="309"><tspan x="34 41 48 55 62 66 73 80 84 91 98 102 106 110 117 124 131 138 142 149 156 160 167">2025-05-14 - 2025-05-27</tspan></text>
<text class="t" y="309"><tspan x="177">I</tspan><tspan class="l" x="181 188">nt</tspan><tspan x="192 196 200 204 208 212 216 225 235 244 253 262 271 280 289 293 297">-II - BORDEAUX - </tspan><tspan class="l" x="301 304 311 315 322 329 333 340 344 347 354">integration</tspan><tspan x="361 365">-3</tspan></text>
<text class="t" y="309"><tspan x="383">H</tspan><tspan class="l" x="392 395 402 406 413 417 420 427 434">istorique</tspan></text>
<text class="t" y="309"><tspan x="502">S</tspan><tspan class="l" x="511 518 522 526 529 536 540 547 554 558 561 568 575">ur la période</tspan></text>
<text class="t" y="309"><tspan x="639">O</tspan><tspan class="l" x="649">k</tspan></text>
<text class="t" y="309"><tspan x="776 783 790 794 801 808">99.61%</tspan></text>
<text class="t" y="309"><tspan x="874 881 888 895 902 909 916 923 927 934">1204886.00</tspan><tspan class="l" x="941">s</tspan></text>
<text class="t" y="326"><tspan x="34 41 48 55 62 66 73 80 84 91 98 102 106 110 117 124 131 138 142 149 156 160 167">2025-05-14 - 2025-05-27</tspan></text>
<text class="t" y="326"><tspan x="177">I</tspan><tspan class="l" x="181 188">nt</tspan><tspan x="192 196 200 204 208 212 216 225 235 244 253 262 271 280 289 293 297">-II - BORDEAUX - </tspan><tspan class="l" x="301 304 311 315 322 329 333 340 344 347 354">integration</tspan><tspan x="361 365">-3</tspan></text>
<text class="t" y="326"><tspan x="383">H</tspan><tspan class="l" x="392 395 402 406 413 417 420 427 434">istorique</tspan></text>
<text class="t" y="326"><tspan x="502">S</tspan><tspan class="l" x="511 518 522 526 529 536 540 547 554 558 561 568 575">ur la période</tspan></text>
<text class="t" y="326"><tspan x="639">D</tspan><tspan class="l" x="648 655 662 669 676 683 690 694 705 712 719 726 733 740 747 751 758">onnées manquantes</tspan></text>
<text class="t" y="326"><tspan x="776 783 787 794 801">0.13%</tspan></text>
<text class="t" y="326"><tspan x="874 881 888 895 902 906 913">1589.00</tspan><tspan class="l" x="920">s</tspan></text>
<text class="t" y="343"><tspan x="34 41 48 55 62 66 73 80 84 91 98 102 106 110 117 124 131 138 142 149 156 160 167">2025-05-14 - 2025-05-27</tspan></text>
<text class="t" y="343"><tspan x="177">I</tspan><tspan class="l" x="181 188">nt</tspan><tspan x="192 196 200 204 208 212 216 225 235 244 253 262 271 280 289 293 297">-II - BORDEAUX - </tspan><tspan class="l" x="301 304 311 315 322 329 333 340 344 347 354">integration</tspan><tspan x="361 365">-3</tspan></text>
<text class="t" y="343"><tspan x="383">H</tspan><tspan class="l" x="392 395 402 406 413 417 420 427 434">istorique</tspan></text>
<text class="t" y="343"><tspan x="502">S</tspan><tspan class="l" x="511 518 522 526 529 536 540 547 554 558 561 568 575">ur la période</tspan></text>
<text class="t" y="343"><tspan x="639">S</tspan><tspan class="l" x="648 655 658 665 672 679 686">hinken </tspan><tspan x="690">I</tspan><tspan class="l" x="694 701 708 715 719 722">nactif</tspan></text>
<text class="t" y="343"><tspan x="776 783 787 794 801">0.26%</tspan></text>
<text class="t" y="343"><tspan x="874 881 888 895 902 906 913">3125.00</tspan><tspan class="l" x="920">s</tspan></text>
<text class="t" y="360"><tspan x="110 117 124 131 138 142 149 156 160 167">2025-05-14</tspan></text>
<text class="t" y="360"><tspan x="177">I</tspan><tspan class="l" x="181 188">nt</tspan><tspan x="192 196 200 204 208 212 216 225 235 244 253 262 271 280 289 293 297">-II - BORDEAUX - </tspan><tspan class="l" x="301 304 311 315 322 329 333 340 344 347 354">integration</tspan><tspan x="361 365">-3</tspan></text>
<text class="t" y="360"><tspan x="383">H</tspan><tspan class="l" x="392 395 402 406 413 417 420 427 434">istorique</tspan></text>
<text class="t" y="360"><tspan x="502">P</tspan><tspan class="l" x="511 518 522 526 529 536 543">ar jour</tspan></text>
<text class="t" y="360"><tspan x="639">O</tspan><tspan class="l" x="649">k</tspan></text>
<text class="t" y="360"><tspan x="776 783 790 797 801 808 815">100.00%</tspan></text>
<text class="t" y="360"><tspan x="874 881 888 895 902 909 913 920">86400.00</tspan><tspan class="l" x="927">s</tspan></text>
<text class="t" y="377"><tspan x="110 117 124 131 138 142 149 156 160 167">2025-05-15</tspan></text>
<text class="t" y="377"><tspan x="177">I</tspan><tspan class="l" x="181 188">nt</tspan><tspan x="192 196 200 204 208 212 216 225 235 244 253 262 271 280 289 293 297">-II - BORDEAUX - </tspan><tspan class="l" x="301 304 311 315 322 329 333 340 344 347 354">integration</tspan><tspan x="361 365">-3</tspan></text>
<text class="t" y="377"><tspan x="383">H</tspan><tspan class="l" x="392 395 402 406 413 417 420 427 434">istorique</tspan></text>
<text class="t" y="377"><tspan x="502">P</tspan><tspan class="l" x="511 518 522 526 529 536 543">ar jour</tspan></text>
<text class="t" y="377"><tspan x="639">O</tspan><tspan class="l" x="649">k</tspan></text>
<text class="t" y="377"><tspan x="776 783 790 794 801 808">98.16%</tspan></text>
<text class="t" y="377"><tspan x="874 881 888 895 902 909 913 920">84810.00</tspan><tspan class="l" x="927">s</tspan></text>
<text class="t" y="394"><tspan x="110 117 124 131 138 142 149 156 160 167">2025-05-15</tspan></text>
<text class="t" y="394"><tspan x="177">I</tspan><tspan class="l" x="181 188">nt</tspan><tspan x="192 196 200 204 208 212 216 225 235 244 253 262 271 280 289 293 297">-II - BORDEAUX - </tspan><tspan class="l" x="301 304 311 315 322 329 333 340 344 347 354">integration</tspan><tspan x="361 365">-3</tspan></text>
<text class="t" y="394"><tspan x="383">H</tspan><tspan class="l" x="392 395 402 406 413 417 420 427 434">istorique</tspan></text>
<text class="t" y="394"><tspan x="502">P</tspan><tspan class="l" x="511 518 522 526 529 536 543">ar jour</tspan></text>
<text class="t" y="394"><tspan x="639">D</tspan><tspan class="l" x="648 655 662 669 676 683 690 694 705 712 719 726 733 740 747 751 758">onnées manquantes</tspan></text>
<text class="t" y="394"><tspan x="776 783 787 794 801">0.63%</tspan></text>
<text class="t" y="394"><tspan x="874 881 888 895 899 906">548.00</tspan><tspan class="l" x="913">s</tspan></text>
<text class="t" y="411"><tspan x="110 117 124 131 138 142 149 156 160 167">2025-05-15</tspan></text>
<text class="t" y="411"><tspan x="177">I</tspan><tspan class="l" x="181 188">nt</tspan><tspan x="192 196 200 204 208 212 216 225 235 244 253 262 271 280 289 293 297">-II - BORDEAUX - </tspan><tspan class="l" x="301 304 311 315 322 329 333 340 344 347 354">integration</tspan><tspan x="361 365">-3</tspan></text>
<text class="t" y="411"><tspan x="383">H</tspan><tspan class="l" x="392 395 402 406 413 417 420 427 434">istorique</tspan></text>
<text class="t" y="411"><tspan x="502">P</tspan><tspan class="l" x="511 518 522 526 529 536 543">ar jour</tspan></text>
<text class="t" y="411"><tspan x="639">S</tspan><tspan class="l" x="648 655 658 665 672 679 686">hinken </tspan><tspan x="690">I</tspan><tspan class="l" x="694 701 708 715 719 722">nactif</tspan></text>
<text class="t" y="411"><tspan x="776 783 787 794 801">1.21%</tspan></text>
<text class="t" y="411"><tspan x="874 881 888 895 902 906 913">1042.00</tspan><tspan class="l" x="920">s</tspan></text>
<text class="t" y="428"><tspan x="110 117 124 131 138 142 149 156 160 167">2025-05-16</tspan></text>
<text class="t" y="428"><tspan x="177">I</tspan><tspan class="l" x="181 188">nt</tspan><tspan x="192 196 200 204 208 212 216 225 235 244 253 262 271 280 289 293 297">-II - BORDEAUX - </tspan><tspan class="l" x="301 304 311 315 322 329 333 340 344 347 354">integration</tspan><tspan x="361 365">-3</tspan></text>
<text class="t" y="428"><tspan x="383">H</tspan><tspan class="l" x="392 395 402 406 413 417 420 427 434">istorique</tspan></text>
<text class="t" y="428"><tspan x="502">P</tspan><tspan class="l" x="511 518 522 526 529 536 543">ar jour</tspan></text>
<text class="t" y="428"><tspan x="639">O</tspan><tspan class="l" x="649">k</tspan></text>
<text class="t" y="428"><tspan x="776 783 790 797 801 808 815">100.00%</tspan></text>
<text class="t" y="428"><tspan x="874 881 888 895 902 909 913 920">86400.00</tspan><tspan class="l" x="927">s</tspan></text>
<text class="t" y="445"><tspan x="110 117 124 131 138 142 149 156 160 167">2025-05-17</tspan></text>
<text class="t" y="445"><tspan x="177">I</tspan><tspan class="l" x="181 188">nt</tspan><tspan x="192 196 200 204 208 212 216 225 235 244 253 262 271 280 289 293 297">-II - BORDEAUX - </tspan><tspan class="l" x="301 304 311 315 322 329 333 340 344 347 354">integration</tspan><tspan x="361 365">-3</tspan></text>
<text class="t" y="445"><tspan x="383">H</tspan><tspan class="l" x="392 395 402 406 413 417 420 427 434">istorique</tspan></text>
<text class="t" y="445"><tspan x="502">P</tspan><tspan class="l" x="511 518 522 526 529 536 543">ar jour</tspan></text>
<text class="t" y="445"><tspan x="639">O</tspan><tspan class="l" x="649">k</tspan></text>
<text class="t" y="445"><tspan x="776 783 790 797 801 808 815">100.00%</tspan></text>
<text class="t" y="445"><tspan x="874 881 888 895 902 909 913 920">86400.00</tspan><tspan class="l" x="927">s</tspan></text>
<text class="t" y="462"><tspan x="110 117 124 131 138 142 149 156 160 167">2025-05-18</tspan></text>
<text class="t" y="462"><tspan x="177">I</tspan><tspan class="l" x="181 188">nt</tspan><tspan x="192 196 200 204 208 212 216 225 235 244 253 262 271 280 289 293 297">-II - BORDEAUX - </tspan><tspan class="l" x="301 304 311 315 322 329 333 340 344 347 354">integration</tspan><tspan x="361 365">-3</tspan></text>
<text class="t" y="462"><tspan x="383">H</tspan><tspan class="l" x="392 395 402 406 413 417 420 427 434">istorique</tspan></text>
<text class="t" y="462"><tspan x="502">P</tspan><tspan class="l" x="511 518 522 526 529 536 543">ar jour</tspan></text>
<text class="t" y="462"><tspan x="639">O</tspan><tspan class="l" x="649">k</tspan></text>
<text class="t" y="462"><tspan x="776 783 790 797 801 808 815">100.00%</tspan></text>
<text class="t" y="462"><tspan x="874 881 888 895 902 909 913 920">86400.00</tspan><tspan class="l" x="927">s</tspan></text>
<text class="t" y="479"><tspan x="110 117 124 131 138 142 149 156 160 167">2025-05-19</tspan></text>
<text class="t" y="479"><tspan x="177">I</tspan><tspan class="l" x="181 188">nt</tspan><tspan x="192 196 200 204 208 212 216 225 235 244 253 262 271 280 289 293 297">-II - BORDEAUX - </tspan><tspan class="l" x="301 304 311 315 322 329 333 340 344 347 354">integration</tspan><tspan x="361 365">-3</tspan></text>
<text class="t" y="479"><tspan x="383">H</tspan><tspan class="l" x="392 395 402 406 413 417 420 427 434">istorique</tspan></text>
<text class="t" y="479"><tspan x="502">P</tspan><tspan class="l" x="511 518 522 526 529 536 543">ar jour</tspan></text>
<text class="t" y="479"><tspan x="639">O</tspan><tspan class="l" x="649">k</tspan></text>
<text class="t" y="479"><tspan x="776 783 790 797 801 808 815">100.00%</tspan></text>
<text class="t" y="479"><tspan x="874 881 888 895 902 909 913 920">86400.00</tspan><tspan class="l" x="927">s</tspan></text>
<text class="t" y="496"><tspan x="110 117 124 131 138 142 149 156 160 167">2025-05-20</tspan></text>
<text class="t" y="496"><tspan x="177">I</tspan><tspan class="l" x="181 188">nt</tspan><tspan x="192 196 200 204 208 212 216 225 235 244 253 262 271 280 289 293 297">-II - BORDEAUX - </tspan><tspan class="l" x="301 304 311 315 322 329 333 340 344 347 354">integration</tspan><tspan x="361 365">-3</tspan></text>
<text class="t" y="496"><tspan x="383">H</tspan><tspan class="l" x="392 395 402 406 413 417 420 427 434">istorique</tspan></text>
<text class="t" y="496"><tspan x="502">P</tspan><tspan class="l" x="511 518 522 526 529 536 543">ar jour</tspan></text>
<text class="t" y="496"><tspan x="639">O</tspan><tspan class="l" x="649">k</tspan></text>
<text class="t" y="496"><tspan x="776 783 790 794 801 808">98.17%</tspan></text>
<text class="t" y="496"><tspan x="874 881 888 895 902 909 913 920">84823.00</tspan><tspan class="l" x="927">s</tspan></text>
<text class="t" y="513"><tspan x="110 117 124 131 138 142 149 156 160 167">2025-05-20</tspan></text>
<text class="t" y="513"><tspan x="177">I</tspan><tspan class="l" x="181 188">nt</tspan><tspan x="192 196 200 204 208 212 216 225 235 244 253 262 271 280 289 293 297">-II - BORDEAUX - </tspan><tspan class="l" x="301 304 311 315 322 329 333 340 344 347 354">integration</tspan><tspan x="361 365">-3</tspan></text>
<text class="t" y="513"><tspan x="383">H</tspan><tspan class="l" x="392 395 402 406 413 417 420 427 434">istorique</tspan></text>
<text class="t" y="513"><tspan x="502">P</tspan><tspan class="l" x="511 518 522 526 529 536 543">ar jour</tspan></text>
<text class="t" y="513"><tspan x="639">D</tspan><tspan class="l" x="648 655 662 669 676 683 690 694 705 712 719 726 733 740 747 751 758">onnées manquantes</tspan></text>
<text class="t" y="513"><tspan x="776 783 787 794 801">0.55%</tspan></text>
<text class="t" y="513"><tspan x="874 881 888 895 899 906">475.00</tspan><tspan class="l" x="913">s</tspan></text>
<text class="t" y="530"><tspan x="110 117 124 131 138 142 149 156 160 167">2025-05-20</tspan></text>
<text class="t" y="530"><tspan x="177">I</tspan><tspan class="l" x="181 188">nt</tspan><tspan x="192 196 200 204 208 212 216 225 235 244 253 262 271 280 289 293 297">-II - BORDEAUX - </tspan><tspan class="l" x="301 304 311 315 322 329 333 340 344 347 354">integration</tspan><tspan x="361 365">-3</tspan></text>
<text class="t" y="530"><tspan x="383">H</tspan><tspan class="l" x="392 395 402 406 413 417 420 427 434">istorique</tspan></text>
<text class="t" y="530"><tspan x="502">P</tspan><tspan class="l" x="511 518 522 526 529 536 543">ar jour</tspan></text>
<text class="t" y="530"><tspan x="639">S</tspan><tspan class="l" x="648 655 658 665 672 679 686">hinken </tspan><tspan x="690">I</tspan><tspan class="l" x="694 701 708 715 719 722">nactif</tspan></text>
<text class="t" y="530"><tspan x="776 783 787 794 801">1.28%</tspan></text>
<text class="t" y="530"><tspan x="874 881 888 895 902 906 913">1102.00</tspan><tspan class="l" x="920">s</tspan></text>
<text class="t" y="547"><tspan x="110 117 124 131 138 142 149 156 160 167">2025-05-21</tspan></text>
<text class="t" y="547"><tspan x="177">I</tspan><tspan class="l" x="181 188">nt</tspan><tspan x="192 196 200 204 208 212 216 225 235 244 253 262 271 280 289 293 297">-II - BORDEAUX - </tspan><tspan class="l" x="301 304 311 315 322 329 333 340 344 347 354">integration</tspan><tspan x="361 365">-3</tspan></text>
<text class="t" y="547"><tspan x="383">H</tspan><tspan class="l" x="392 395 402 406 413 417 420 427 434">istorique</tspan></text>
<text class="t" y="547"><tspan x="502">P</tspan><tspan class="l" x="511 518 522 526 529 536 543">ar jour</tspan></text>
<text class="t" y="547"><tspan x="639">O</tspan><tspan class="l" x="649">k</tspan></text>
<text class="t" y="547"><tspan x="776 783 790 797 801 808 815">100.00%</tspan></text>
<text class="t" y="547"><tspan x="874 881 888 895 902 909 913 920">86400.00</tspan><tspan class="l" x="927">s</tspan></text>
<text class="t" y="564"><tspan x="110 117 124 131 138 142 149 156 160 167">2025-05-22</tspan></text>
<text class="t" y="564"><tspan x="177">I</tspan><tspan class="l" x="181 188">nt</tspan><tspan x="192 196 200 204 208 212 216 225 235 244 253 262 271 280 289 293 297">-II - BORDEAUX - </tspan><tspan class="l" x="301 304 311 315 322 329 333 340 344 347 354">integration</tspan><tspan x="361 365">-3</tspan></text>
<text class="t" y="564"><tspan x="383">H</tspan><tspan class="l" x="392 395 402 406 413 417 420 427 434">istorique</tspan></text>
<text class="t" y="564"><tspan x="502">P</tspan><tspan class="l" x="511 518 522 526 529 536 543">ar jour</tspan></text>
<text class="t" y="564"><tspan x="639">O</tspan><tspan class="l" x="649">k</tspan></text>
<text class="t" y="564"><tspan x="776 783 790 797 801 808 815">100.00%</tspan></text>
<text class="t" y="564"><tspan x="874 881 888 895 902 909 913 920">86400.00</tspan><tspan class="l" x="927">s</tspan></text>
<text class="t" y="581"><tspan x="110 117 124 131 138 142 149 156 160 167">2025-05-23</tspan></text>
<text class="t" y="581"><tspan x="177">I</tspan><tspan class="l" x="181 188">nt</tspan><tspan x="192 196 200 204 208 212 216 225 235 244 253 262 271 280 289 293 297">-II - BORDEAUX - </tspan><tspan class="l" x="301 304 311 315 322 329 333 340 344 347 354">integration</tspan><tspan x="361 365">-3</tspan></text>
<text class="t" y="581"><tspan x="383">H</tspan><tspan class="l" x="392 395 402 406 413 417 420 427 434">istorique</tspan></text>
<text class="t" y="581"><tspan x="502">P</tspan><tspan class="l" x="511 518 522 526 529 536 543">ar jour</tspan></text>
<text class="t" y="581"><tspan x="639">O</tspan><tspan class="l" x="649">k</tspan></text>
<text class="t" y="581"><tspan x="776 783 790 794 801 808">98.34%</tspan></text>
<text class="t" y="581"><tspan x="874 881 888 895 902 909 913 920">84974.00</tspan><tspan class="l" x="927">s</tspan></text>
<text class="t" y="598"><tspan x="110 117 124 131 138 142 149 156 160 167">2025-05-23</tspan></text>
<text class="t" y="598"><tspan x="177">I</tspan><tspan class="l" x="181 188">nt</tspan><tspan x="192 196 200 204 208 212 216 225 235 244 253 262 271 280 289 293 297">-II - BORDEAUX - </tspan><tspan class="l" x="301 304 311 315 322 329 333 340 344 347 354">integration</tspan><tspan x="361 365">-3</tspan></text>
<text class="t" y="598"><tspan x="383">H</tspan><tspan class="l" x="392 395 402 406 413 417 420 427 434">istorique</tspan></text>
<text class="t" y="598"><tspan x="502">P</tspan><tspan class="l" x="511 518 522 526 529 536 543">ar jour</tspan></text>
<text class="t" y="598"><tspan x="639">D</tspan><tspan class="l" x="648 655 662 669 676 683 690 694 705 712 719 726 733 740 747 751 758">onnées manquantes</tspan></text>
<text class="t" y="598"><tspan x="776 783 787 794 801">0.52%</tspan></text>
<text class="t" y="598"><tspan x="874 881 888 895 899 906">445.00</tspan><tspan class="l" x="913">s</tspan></text>
<text class="t" y="615"><tspan x="110 117 124 131 138 142 149 156 160 167">2025-05-23</tspan></text>
<text class="t" y="615"><tspan x="177">I</tspan><tspan class="l" x="181 188">nt</tspan><tspan x="192 196 200 204 208 212 216 225 235 244 253 262 271 280 289 293 297">-II - BORDEAUX - </tspan><tspan class="l" x="301 304 311 315 322 329 333 340 344 347 354">integration</tspan><tspan x="361 365">-3</tspan></text>
<text class="t" y="615"><tspan x="383">H</tspan><tspan class="l" x="392 395 402 406 413 417 420 427 434">istorique</tspan></text>
<text class="t" y="615"><tspan x="502">P</tspan><tspan class="l" x="511 518 522 526 529 536 543">ar jour</tspan></text>
<text class="t" y="615"><tspan x="639">S</tspan><tspan class="l" x="648 655 658 665 672 679 686">hinken </tspan><tspan x="690">I</tspan><tspan class="l" x="694 701 708 715 719 722">nactif</tspan></text>
<text class="t" y="615"><tspan x="776 783 787 794 801">1.14%</tspan></text>
<text class="t" y="615"><tspan x="874 881 888 895 899 906">981.00</tspan><tspan class="l" x="913">s</tspan></text>
<text class="t" y="632"><tspan x="110 117 124 131 138 142 149 156 160 167">2025-05-24</tspan></text>
<text class="t" y="632"><tspan x="177">I</tspan><tspan class="l" x="181 188">nt</tspan><tspan x="192 196 200 204 208 212 216 225 235 244 253 262 271 280 289 293 297">-II - BORDEAUX - </tspan><tspan class="l" x="301 304 311 315 322 329 333 340 344 347 354">integration</tspan><tspan x="361 365">-3</tspan></text>
<text class="t" y="632"><tspan x="383">H</tspan><tspan class="l" x="392 395 402 406 413 417 420 427 434">istorique</tspan></text>
<text class="t" y="632"><tspan x="502">P</tspan><tspan class="l" x="511 518 522 526 529 536 543">ar jour</tspan></text>
<text class="t" y="632"><tspan x="639">O</tspan><tspan class="l" x="649">k</tspan></text>
<text class="t" y="632"><tspan x="776 783 790 797 801 808 815">100.00%</tspan></text>
<text class="t" y="632"><tspan x="874 881 888 895 902 909 913 920">86400.00</tspan><tspan class="l" x="927">s</tspan></text>
<text class="t" y="649"><tspan x="110 117 124 131 138 142 149 156 160 167">2025-05-25</tspan></text>
<text class="t" y="649"><tspan x="177">I</tspan><tspan class="l" x="181 188">nt</tspan><tspan x="192 196 200 204 208 212 216 225 235 244 253 262 271 280 289 293 297">-II - BORDEAUX - </tspan><tspan class="l" x="301 304 311 315 322 329 333 340 344 347 354">integration</tspan><tspan x="361 365">-3</tspan></text>
<text class="t" y="649"><tspan x="383">H</tspan><tspan class="l" x="392 395 402 406 413 417 420 427 434">istorique</tspan></text>
<text class="t" y="649"><tspan x="502">P</tspan><tspan class="l" x="511 518 522 526 529 536 543">ar jour</tspan></text>
<text class="t" y="649"><tspan x="639">O</tspan><tspan class="l" x="649">k</tspan></text>
<text class="t" y="649"><tspan x="776 783 790 797 801 808 815">100.00%</tspan></text>
<text class="t" y="649"><tspan x="874 881 888 895 902 909 913 920">86400.00</tspan><tspan class="l" x="927">s</tspan></text>
<text class="t" y="666"><tspan x="110 117 124 131 138 142 149 156 160 167">2025-05-26</tspan></text>
<text class="t" y="666"><tspan x="177">I</tspan><tspan class="l" x="181 188">nt</tspan><tspan x="192 196 200 204 208 212 216 225 235 244 253 262 271 280 289 293 297">-II - BORDEAUX - </tspan><tspan class="l" x="301 304 311 315 322 329 333 340 344 347 354">integration</tspan><tspan x="361 365">-3</tspan></text>
<text class="t" y="666"><tspan x="383">H</tspan><tspan class="l" x="392 395 402 406 413 417 420 427 434">istorique</tspan></text>
<text class="t" y="666"><tspan x="502">P</tspan><tspan class="l" x="511 518 522 526 529 536 543">ar jour</tspan></text>
<text class="t" y="666"><tspan x="639">O</tspan><tspan class="l" x="649">k</tspan></text>
<text class="t" y="666"><tspan x="776 783 790 794 801 808">99.86%</tspan></text>
<text class="t" y="666"><tspan x="874 881 888 895 902 909 913 920">86279.00</tspan><tspan class="l" x="927">s</tspan></text>
<text class="t" y="683"><tspan x="110 117 124 131 138 142 149 156 160 167">2025-05-26</tspan></text>
<text class="t" y="683"><tspan x="177">I</tspan><tspan class="l" x="181 188">nt</tspan><tspan x="192 196 200 204 208 212 216 225 235 244 253 262 271 280 289 293 297">-II - BORDEAUX - </tspan><tspan class="l" x="301 304 311 315 322 329 333 340 344 347 354">integration</tspan><tspan x="361 365">-3</tspan></text>
<text class="t" y="683"><tspan x="383">H</tspan><tspan class="l" x="392 395 402 406 413 417 420 427 434">istorique</tspan></text>
<text class="t" y="683"><tspan x="502">P</tspan><tspan class="l" x="511 518 522 526 529 536 543">ar jour</tspan></text>
<text class="t" y="683"><tspan x="639">D</tspan><tspan class="l" x="648 655 662 669 676 683 690 694 705 712 719 726 733 740 747 751 758">onnées manquantes</tspan></text>
<text class="t" y="683"><tspan x="776 783 787 794 801">0.14%</tspan></text>
<text class="t" y="683"><tspan x="874 881 888 895 899 906">121.00</tspan><tspan class="l" x="913">s</tspan></text>
<text class="t" y="700"><tspan x="110 117 124 131 138 142 149 156 160 167">2025-05-27</tspan></text>
<text class="t" y="700"><tspan x="177">I</tspan><tspan class="l" x="181 188">nt</tspan><tspan x="192 196 200 204 208 212 216 225 235 244 253 262 271 280 289 293 297">-II - BORDEAUX - </tspan><tspan class="l" x="301 304 311 315 322 329 333 340 344 347 354">integration</tspan><tspan x="361 365">-3</tspan></text>
<text class="t" y="700"><tspan x="383">H</tspan><tspan class="l" x="392 395 402 406 413 417 420 427 434">istorique</tspan></text>
<text class="t" y="700"><tspan x="502">P</tspan><tspan class="l" x="511 518 522 526 529 536 543">ar jour</tspan></text>
<text class="t" y="700"><tspan x="639">O</tspan><tspan class="l" x="649">k</tspan></text>
<text class="t" y="700"><tspan x="776 783 790 797 801 808 815">100.00%</tspan></text>
<text class="t" y="700"><tspan x="874 881 888 895 902 909 913 920">86400.00</tspan><tspan class="l" x="927">s</tspan></text>
<text class="t" y="717"><tspan x="34 41 48 55 62 66 73 80 84 91 98 102 106 110 117 124 131 138 142 149 156 160 167">2025-05-14 - 2025-05-27</tspan></text>
<text class="t" y="717"><tspan x="177">I</tspan><tspan class="l" x="181 188">nt</tspan><tspan x="192 196 200 204 208 212 216 225 235 244 253 262 271 280 289 293 297">-II - BORDEAUX - </tspan><tspan class="l" x="301 304 311 315 322 329 333 340 344 347 354">integration</tspan><tspan x="361 365">-7</tspan></text>
<text class="t" y="717"><tspan x="383">H</tspan><tspan class="l" x="392 395 402 406 413 417 420 427 434">istorique</tspan></text>
<text class="t" y="717"><tspan x="502">S</tspan><tspan class="l" x="511 518 522 526 529 536 540 547 554 558 561 568 575">ur la période</tspan></text>
<text class="t" y="717"><tspan x="639">O</tspan><tspan class="l" x="649">k</tspan></text>
<text class="t" y="717"><tspan x="776 783 790 794 801 808">99.61%</tspan></text>
<text class="t" y="717"><tspan x="874 881 888 895 902 909 916 923 927 934">1204923.00</tspan><tspan class="l" x="941">s</tspan></text>
<text class="t" y="734"><tspan x="34 41 48 55 62 66 73 80 84 91 98 102 106 110 117 124 131 138 142 149 156 160 167">2025-05-14 - 2025-05-27</tspan></text>
<text class="t" y="734"><tspan x="177">I</tspan><tspan class="l" x="181 188">nt</tspan><tspan x="192 196 200 204 208 212 216 225 235 244 253 262 271 280 289 293 297">-II - BORDEAUX - </tspan><tspan class="l" x="301 304 311 315 322 329 333 340 344 347 354">integration</tspan><tspan x="361 365">-7</tspan></text>
<text class="t" y="734"><tspan x="383">H</tspan><tspan class="l" x="392 395 402 406 413 417 420 427 434">istorique</tspan></text>
<text class="t" y="734"><tspan x="502">S</tspan><tspan class="l" x="511 518 522 526 529 536 540 547 554 558 561 568 575">ur la période</tspan></text>
<text class="t" y="734"><tspan x="639">D</tspan><tspan class="l" x="648 655 662 669 676 683 690 694 705 712 719 726 733 740 747 751 758">onnées manquantes</tspan></text>
<text class="t" y="734"><tspan x="776 783 787 794 801">0.13%</tspan></text>
<text class="t" y="734"><tspan x="874 881 888 895 902 906 913">1552.00</tspan><tspan class="l" x="920">s</tspan></text>
<text class="t" y="751"><tspan x="34 41 48 55 62 66 73 80 84 91 98 102 106 110 117 124 131 138 142 149 156 160 167">2025-05-14 - 2025-05-27</tspan></text>
<text class="t" y="751"><tspan x="177">I</tspan><tspan class="l" x="181 188">nt</tspan><tspan x="192 196 200 204 208 212 216 225 235 244 253 262 271 280 289 293 297">-II - BORDEAUX - </tspan><tspan class="l" x="301 304 311 315 322 329 333 340 344 347 354">integration</tspan><tspan x="361 365">-7</tspan></text>
<text class="t" y="751"><tspan x="383">H</tspan><tspan class="l" x="392 395 402 406 413 417 420 427 434">istorique</tspan></text>
<text class="t" y="751"><tspan x="502">S</tspan><tspan class="l" x="511 518 522 526 529 536 540 547 554 558 561 568 575">ur la période</tspan></text>
<text class="t" y="751"><tspan x="639">S</tspan><tspan class="l" x="648 655 658 665 672 679 686">hinken </tspan><tspan x="690">I</tspan><tspan class="l" x="694 701 708 715 719 722">nactif</tspan></text>
<text class="t" y="751"><tspan x="776 783 787 794 801">0.26%</tspan></text>
<text class="t" y="751"><tspan x="874 881 888 895 902 906 913">3125.00</tspan><tspan class="l" x="920">s</tspan></text>
<text class="t" y="768"><tspan x="110 117 124 131 138 142 149 156 160 167">2025-05-14</tspan></text>
<text class="t" y="768"><tspan x="177">I</tspan><tspan class="l" x="181 188">nt</tspan><tspan x="192 196 200 204 208 212 216 225 235 244 253 262 271 280 289 293 297">-II - BORDEAUX - </tspan><tspan class="l" x="301 304 311 315 322 329 333 340 344 347 354">integration</tspan><tspan x="361 365">-7</tspan></text>
<text class="t" y="768"><tspan x="383">H</tspan><tspan class="l" x="392 395 402 406 413 417 420 427 434">istorique</tspan></text>
<text class="t" y="768"><tspan x="502">P</tspan><tspan class="l" x="511 518 522 526 529 536 543">ar jour</tspan></text>
<text class="t" y="768"><tspan x="639">O</tspan><tspan class="l" x="649">k</tspan></text>
<text class="t" y="768"><tspan x="776 783 790 797 801 808 815">100.00%</tspan></text>
<text class="t" y="768"><tspan x="874 881 888 895 902 909 913 920">86400.00</tspan><tspan class="l" x="927">s</tspan></text>
<text class="t" y="785"><tspan x="110 117 124 131 138 142 149 156 160 167">2025-05-15</tspan></text>
<text class="t" y="785"><tspan x="177">I</tspan><tspan class="l" x="181 188">nt</tspan><tspan x="192 196 200 204 208 212 216 225 235 244 253 262 271 280 289 293 297">-II - BORDEAUX - </tspan><tspan class="l" x="301 304 311 315 322 329 333 340 344 347 354">integration</tspan><tspan x="361 365">-7</tspan></text>
<text class="t" y="785"><tspan x="383">H</tspan><tspan class="l" x="392 395 402 406 413 417 420 427 434">istorique</tspan></text>
<text class="t" y="785"><tspan x="502">P</tspan><tspan class="l" x="511 518 522 526 529 536 543">ar jour</tspan></text>
<text class="t" y="785"><tspan x="639">O</tspan><tspan class="l" x="649">k</tspan></text>
<text class="t" y="785"><tspan x="776 783 790 794 801 808">98.13%</tspan></text>
<text class="t" y="785"><tspan x="874 881 888 895 902 909 913 920">84788.00</tspan><tspan class="l" x="927">s</tspan></text>
<text class="t" y="802"><tspan x="110 117 124 131 138 142 149 156 160 167">2025-05-15</tspan></text>
<text class="t" y="802"><tspan x="177">I</tspan><tspan class="l" x="181 188">nt</tspan><tspan x="192 196 200 204 208 212 216 225 235 244 253 262 271 280 289 293 297">-II - BORDEAUX - </tspan><tspan class="l" x="301 304 311 315 322 329 333 340 344 347 354">integration</tspan><tspan x="361 365">-7</tspan></text>
<text class="t" y="802"><tspan x="383">H</tspan><tspan class="l" x="392 395 402 406 413 417 420 427 434">istorique</tspan></text>
<text class="t" y="802"><tspan x="502">P</tspan><tspan class="l" x="511 518 522 526 529 536 543">ar jour</tspan></text>
<text class="t" y="802"><tspan x="639">D</tspan><tspan class="l" x="648 655 662 669 676 683 690 694 705 712 719 726 733 740 747 751 758">onnées manquantes</tspan></text>
<text class="t" y="802"><tspan x="776 783 787 794 801">0.66%</tspan></text>
<text class="t" y="802"><tspan x="874 881 888 895 899 906">570.00</tspan><tspan class="l" x="913">s</tspan></text>
<text class="t" y="819"><tspan x="110 117 124 131 138 142 149 156 160 167">2025-05-15</tspan></text>
<text class="t" y="819"><tspan x="177">I</tspan><tspan class="l" x="181 188">nt</tspan><tspan x="192 196 200 204 208 212 216 225 235 244 253 262 271 280 289 293 297">-II - BORDEAUX - </tspan><tspan class="l" x="301 304 311 315 322 329 333 340 344 347 354">integration</tspan><tspan x="361 365">-7</tspan></text>
<text class="t" y="819"><tspan x="383">H</tspan><tspan class="l" x="392 395 402 406 413 417 420 427 434">istorique</tspan></text>
<text class="t" y="819"><tspan x="502">P</tspan><tspan class="l" x="511 518 522 526 529 536 543">ar jour</tspan></text>
<text class="t" y="819"><tspan x="639">S</tspan><tspan class="l" x="648 655 658 665 672 679 686">hinken </tspan><tspan x="690">I</tspan><tspan class="l" x="694 701 708 715 719 722">nactif</tspan></text>
<text class="t" y="819"><tspan x="776 783 787 794 801">1.21%</tspan></text>
<text class="t" y="819"><tspan x="874 881 888 895 902 906 913">1042.00</tspan><tspan class="l" x="920">s</tspan></text>
<g stroke="#ff0000" stroke-width="1.25" fill="none">
<use href="#w0" y="54"/>
<use href="#w1" y="54"/>
<use href="#w2" y="71"/>
<use href="#w3" y="258"/>
<use href="#w4" y="258"/>
<use href="#w5" y="309"/>
<use href="#w6" y="309"/>
<use href="#w7" y="309"/>
<use href="#w5" y="326"/>
<use href="#w6" y="326"/>
<use href="#w5" y="343"/>
<use href="#w6" y="343"/>
<use href="#w8" y="343"/>
<use href="#w5" y="360"/>
<use href="#w6" y="360"/>
<use href="#w7" y="360"/>
<use href="#w5" y="377"/>
<use href="#w6" y="377"/>
<use href="#w7" y="377"/>
<use href="#w5" y="394"/>
<use href="#w6" y="394"/>
<use href="#w5" y="411"/>
<use href="#w6" y="411"/>
<use href="#w8" y="411"/>
<use href="#w5" y="428"/>
<use href="#w6" y="428"/>
<use href="#w7" y="428"/>
<use href="#w5" y="445"/>
<use href="#w6" y="445"/>
<use href="#w7" y="445"/>
<use href="#w5" y="462"/>
<use href="#w6" y="462"/>
<use href="#w7" y="462"/>
<use href="#w5" y="479"/>
<use href="#w6" y="479"/>
<use href="#w7" y="479"/>
<use href="#w5" y="496"/>
<use href="#w6" y="496"/>
<use href="#w7" y="496"/>
<use href="#w5" y="513"/>
<use href="#w6" y="513"/>
<use href="#w5" y="530"/>
<use href="#w6" y="530"/>
<use href="#w8" y="530"/>
<use href="#w5" y="547"/>
<use href="#w6" y="547"/>
<use href="#w7" y="547"/>
<use href="#w5" y="564"/>
<use href="#w6" y="564"/>
<use href="#w7" y="564"/>
<use href="#w5" y="581"/>
<use href="#w6" y="581"/>
<use href="#w7" y="581"/>
<use href="#w5" y="598"/>
<use href="#w6" y="598"/>
<use href="#w5" y="615"/>
<use href="#w6" y="615"/>
<use href="#w8" y="615"/>
<use href="#w5" y="632"/>
<use href="#w6" y="632"/>
<use href="#w7" y="632"/>
<use href="#w5" y="649"/>
<use href="#w6" y="649"/>
<use href="#w7" y="649"/>
<use href="#w5" y="666"/>
<use href="#w6" y="666"/>
<use href="#w7" y="666"/>
<use href="#w5" y="683"/>
<use href="#w6" y="683"/>
<use href="#w5" y="700"/>
<use href="#w6" y="700"/>
<use href="#w7" y="700"/>
<use href="#w5" y="717"/>
<use href="#w6" y="717"/>
<use href="#w7" y="717"/>
<use href="#w5" y="734"/>
<use href="#w6" y="734"/>
<use href="#w5" y="751"/>
<use href="#w6" y="751"/>
<use href="#w8" y="751"/>
<use href="#w5" y="768"/>
<use href="#w6" y="768"/>
<use href="#w7" y="768"/>
<use href="#w5" y="785"/>
<use href="#w6" y="785"/>
<use href="#w7" y="785"/>
<use href="#w5" y="802"/>
<use href="#w6" y="802"/>
<use href="#w5" y="819"/>
<use href="#w6" y="819"/>
<use href="#w8" y="819"/>
</g></svg></body></html>
